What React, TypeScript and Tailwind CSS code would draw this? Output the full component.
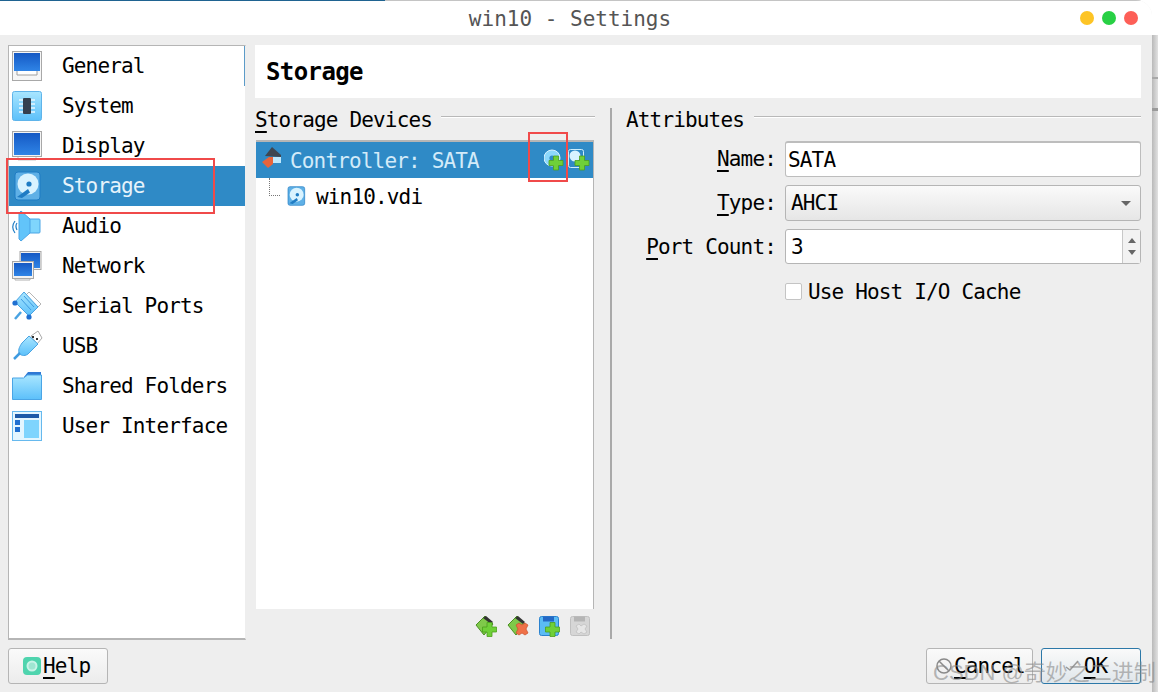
import type { ReactNode } from "react";

const MONO = "font-['DejaVu_Sans_Mono','Liberation_Mono',monospace]";
const TEXT = "text-[21px] tracking-[-0.84px] whitespace-pre";

function Frame({ children }: { children: ReactNode }) {
  return (
    <svg width="30" height="30" viewBox="0 0 30 30" className="shrink-0 overflow-visible">
      <defs>
        <linearGradient id="screen" x1="0" y1="0" x2="0" y2="1">
          <stop offset="0" stopColor="#1559c4" />
          <stop offset="1" stopColor="#2f84e6" />
        </linearGradient>
        <linearGradient id="sky" x1="0" y1="0" x2="0" y2="1">
          <stop offset="0" stopColor="#a9e6ff" />
          <stop offset="1" stopColor="#5cc0fa" />
        </linearGradient>
      </defs>
      {children}
    </svg>
  );
}

function GeneralIcon() {
  return (
    <Frame>
      <rect x="0.5" y="0.5" width="29" height="29" fill="#f6f6f6" stroke="#a8a8a8" />
      <rect x="2" y="2" width="26" height="18" fill="url(#screen)" />
      <path d="M5 20v4h20v-4" fill="#fff" stroke="#9e9e9e" />
    </Frame>
  );
}

function SystemIcon() {
  return (
    <Frame>
      <rect x="0.5" y="0.5" width="29" height="29" rx="2" fill="url(#sky)" stroke="#5fb4ea" />
      <path d="M7 9h16M7 13h16M7 17h16M7 21h16" stroke="#e9f8ff" strokeWidth="1.5" />
      <rect x="11" y="7" width="8" height="16" rx="1" fill="#35404f" />
    </Frame>
  );
}

function DisplayIcon() {
  return (
    <Frame>
      <path d="M6 24v5h18v-5" fill="#fff" stroke="#c8c8c8" />
      <rect x="0.5" y="0.5" width="29" height="25" fill="#f4f4f4" stroke="#a8a8a8" />
      <rect x="2" y="2" width="26" height="22" fill="url(#screen)" />
    </Frame>
  );
}

function DiskIcon({ size = 30 }: { size?: number }) {
  return (
    <svg width={size} height={size} viewBox="0 0 30 30" className="shrink-0">
      <rect x="3" y="1" width="25" height="28" rx="3" fill="#5fb0e6" stroke="#1f7cc4" />
      <circle cx="16" cy="13" r="10.5" fill="#d9f3ff" />
      <circle cx="17" cy="13" r="2.6" fill="#1f7cc4" />
      <path d="M5 26l11-8 2 3.5-8 5.5z" fill="#1f7cc4" />
    </svg>
  );
}

function AudioIcon() {
  return (
    <Frame>
      <rect x="17" y="8" width="11" height="14" rx="1" fill="#7fd5fc" stroke="#4aa5e6" />
      <path d="M7 2l2-2 9 8v14l-9 8-2-2z" fill="#62c4fa" stroke="#4aa5e6" />
      <path d="M3 10c-3 4-3 8 0 12M5 12c-1.500 2-1.500 4 0 7" fill="none" stroke="#1f7cc4" strokeWidth="1.2" />
    </Frame>
  );
}

function NetworkIcon() {
  return (
    <Frame>
      <rect x="8" y="0.500" width="21" height="18" fill="#f2f2f2" stroke="#a8a8a8" />
      <rect x="9" y="2" width="19" height="15" fill="url(#screen)" />
      <path d="M3 25v4h15v-4" fill="#fff" stroke="#b0b0b0" />
      <rect x="0.500" y="10.500" width="21" height="17" fill="#f2f2f2" stroke="#a8a8a8" />
      <rect x="2" y="12" width="18" height="13" fill="url(#screen)" />
    </Frame>
  );
}

function SerialIcon() {
  return (
    <Frame>
      <path d="M17 1l12 12-3 3L14 4z" fill="#fff" stroke="#b5b5b5" />
      <path d="M12 1l14 15-9 9L3 11z" fill="url(#sky)" stroke="#49a3e2" />
      <path d="M12 5l10 11M9 8l10 11" stroke="#3f9be0" strokeWidth="1" />
      <circle cx="3" cy="12" r="2.600" fill="#1f6fd0" />
      <circle cx="17" cy="26" r="2.600" fill="#1f6fd0" />
      <path d="M9 21l-6 7" stroke="#49a3e2" strokeWidth="2.500" />
    </Frame>
  );
}

function UsbIcon() {
  return (
    <Frame>
      <path d="M19 5l7-5 4 7-5 6z" fill="#fff" stroke="#aaa" />
      <path d="M17 5l9 8-10 10c-4 3-8 1-9-1-1-4 1-7 3-10z" fill="url(#sky)" stroke="#49a3e2" />
      <path d="M8 22l-6 6" stroke="#3f9be0" strokeWidth="2.500" />
      <rect x="20" y="5" width="2" height="2" fill="#333" />
      <rect x="24" y="7" width="2" height="2" fill="#333" />
    </Frame>
  );
}

function FolderIcon() {
  return (
    <Frame>
      <path d="M12 6l4-5h13v8H12z" fill="#2f79d4" />
      <path d="M0.500 28.500V7h11l4-3h14v24.500z" fill="url(#sky)" stroke="#4aa5e6" />
    </Frame>
  );
}

function UiIcon() {
  return (
    <Frame>
      <rect x="0.500" y="0.500" width="29" height="29" fill="#e3f6ff" stroke="#66b9ee" />
      <rect x="3" y="3" width="24" height="4" fill="#1d5aa8" />
      <rect x="3" y="9" width="5" height="5" fill="#1f6fd0" />
      <rect x="3" y="16" width="5" height="5" fill="#1f6fd0" />
      <rect x="12" y="9" width="15" height="18" fill="#7ed4fd" />
    </Frame>
  );
}

const SECTIONS = [
  { label: "General", icon: <GeneralIcon /> },
  { label: "System", icon: <SystemIcon /> },
  { label: "Display", icon: <DisplayIcon /> },
  { label: "Storage", icon: <DiskIcon /> },
  { label: "Audio", icon: <AudioIcon /> },
  { label: "Network", icon: <NetworkIcon /> },
  { label: "Serial Ports", icon: <SerialIcon /> },
  { label: "USB", icon: <UsbIcon /> },
  { label: "Shared Folders", icon: <FolderIcon /> },
  { label: "User Interface", icon: <UiIcon /> },
];

function Plus({ x, y }: { x: number; y: number }) {
  return (
    <path
      transform={`translate(${x} ${y})`}
      d="M4.500 0h5v4.500H14v5H9.500V14h-5V9.500H0v-5h4.500z"
      fill="#6fd038"
      stroke="#4c9f1c"
      strokeWidth="0.8"
    />
  );
}

function SideItem({ label, icon, active }: { label: string; icon: ReactNode; active: boolean }) {
  return (
    <div className={`flex h-10 items-center pl-[3px] ${active ? "bg-[#2f8ac6] text-[#e6f3fb]" : "text-black"}`}>
      {icon}
      <span className={`ml-5 pt-[2px] ${TEXT}`}>{label}</span>
    </div>
  );
}

function Heading({ children, width }: { children: ReactNode; width: string }) {
  return (
    <div className="flex h-6 items-center">
      <span className={`${width} pt-[4px] ${TEXT}`}>{children}</span>
      <div className="ml-2 h-[2px] flex-1 -translate-y-[2px] border-t border-[#b8b8b8] bg-white" />
    </div>
  );
}

function Key({ children }: { children: ReactNode }) {
  return <span className="underline decoration-2 underline-offset-4">{children}</span>;
}

function FieldLabel({ children }: { children: ReactNode }) {
  return <span className={`w-[169px] pr-[9px] pt-[2px] text-right ${TEXT}`}>{children}</span>;
}

export default function App() {
  return (
    <div className={`relative flex h-[692px] w-[1158px] overflow-hidden bg-white text-black ${MONO}`}>
      <div className="flex h-full w-[1152px] shrink-0 flex-col overflow-hidden rounded-tr-2xl bg-[#eeeeee]">
        <div className="flex h-px shrink-0">
          <div className="w-[385px] bg-[#1f6391]" />
          <div className="flex-1 bg-[#c4c4c4]" />
        </div>
        {/* title bar */}
        <div className="relative flex h-[34px] shrink-0 items-center justify-center bg-white pr-[12px] pt-[3px] text-[21px] text-[#555] tracking-[0px]">
          win10 - Settings
          <div className="absolute right-[14px] top-[10px] flex gap-2">
            <div className="h-[14px] w-[14px] rounded-full bg-[#fdc425]" />
            <div className="h-[14px] w-[14px] rounded-full bg-[#28d044]" />
            <div className="h-[14px] w-[14px] rounded-full bg-[#fd5f57]" />
          </div>
        </div>

        <div className="flex h-[604px] shrink-0 pl-2 pr-[11px] pt-[10px]">
          {/* section list */}
          <div className="h-[595px] w-[238px] shrink-0 border border-b-2 border-[#b5b5b5] border-r-[#eeeeee] bg-white">
            {SECTIONS.map((s, i) => (
              <div key={s.label} className={i === 0 ? "border-r border-[#5b9bc8]" : ""}>
                <SideItem label={s.label} icon={s.icon} active={s.label === "Storage"} />
              </div>
            ))}
          </div>

          <div className="ml-[9px] flex min-w-0 flex-1 flex-col">
            <div className="flex h-[53px] shrink-0 items-center bg-white pl-[11px] text-[24px] font-bold tracking-[-0.6px]">
              Storage
            </div>

            <div className="flex flex-1">
              {/* storage tree */}
              <div className="w-[340px] shrink-0 pt-[9px]">
                <Heading width="w-[178px]">
                  <Key>S</Key>torage Devices
                </Heading>
                <div className="ml-px mt-[9px] h-[469px] w-[338px] border-t-2 border-r border-[#b5b5b5] bg-white">
                  <div className="flex h-9 items-center bg-[#2f8ac6] pl-[5px] pr-[3px] text-[#d3ebf9]">
                    <svg width="25" height="28" viewBox="0 0 25 28" className="shrink-0">
                      <path d="M4 10L11 1l9 8v2z" fill="#3f4650" />
                      <rect x="10" y="11" width="10" height="6" fill="#bfe8fc" />
                      <path d="M1 16l7-5h4v7l-5 4z" fill="#e8643a" />
                    </svg>
                    <span className={`ml-[4px] flex-1 pt-[4px] ${TEXT}`}>Controller: SATA</span>
                    <svg width="46" height="22" viewBox="0 0 46 22" className="shrink-0">
                      <circle cx="8" cy="9" r="8" fill="#8dd8fb" stroke="#d8f3ff" />
                      <circle cx="8" cy="9" r="2.600" fill="#2f8ac6" />
                      <Plus x={5} y={7} />
                      <rect x="24.500" y="0.500" width="15" height="18" rx="2" fill="#2f8ac6" stroke="#cdeefd" />
                      <circle cx="31" cy="7" r="5.500" fill="#d8f3ff" />
                      <Plus x={31} y={7} />
                    </svg>
                  </div>
                  <div className="relative flex h-9 items-center pl-[30px]">
                    <div className="absolute left-[13px] top-0 h-[18px] w-[11px] border-b border-l border-dotted border-[#777]" />
                    <DiskIcon size={20} />
                    <span className={`ml-[10px] pt-[4px] ${TEXT}`}>win10.vdi</span>
                  </div>
                </div>
                <div className="mt-[6px] flex w-[336px] justify-end gap-[10px]">
                  <svg width="22" height="22" viewBox="0 0 22 22">
                    <path d="M1 10L10 1l8 8-9 11z" fill="#7fc94a" stroke="#4b8f24" />
                    <path d="M8 3l3-2 7 6-2 2z" fill="#333" />
                    <Plus x={7.500} y={7.500} />
                  </svg>
                  <svg width="22" height="22" viewBox="0 0 22 22">
                    <path d="M1 10L10 1l8 8-9 11z" fill="#7fc94a" stroke="#4b8f24" />
                    <path d="M8 3l3-2 7 6-2 2z" fill="#333" />
                    <path d="M9 10l3-2 3 2 3-2 3 2-2 4 2 4-3 2-3-2-3 2-3-2 2-4z" fill="#ef7148" stroke="#cc4f2a" strokeWidth="0.700" />
                  </svg>
                  <svg width="21" height="22" viewBox="0 0 21 22">
                    <rect x="0.500" y="1.500" width="19" height="19" rx="2" fill="#5bbcf5" stroke="#2b82cf" />
                    <rect x="4" y="1.500" width="11" height="5" fill="#2468c5" />
                    <Plus x={6.500} y={7.500} />
                  </svg>
                  <svg width="21" height="22" viewBox="0 0 21 22">
                    <rect x="0.500" y="1.500" width="19" height="19" rx="2" fill="#d6d6d6" stroke="#c0c0c0" />
                    <rect x="4" y="1.500" width="11" height="5" fill="#b5b5b5" />
                    <path d="M6 11l3-2 2 2 3-2 3 2-2 3 2 3-3 2-3-2-2 2-3-2 2-3z" fill="#e6e6e6" stroke="#bdbdbd" strokeWidth="0.700" />
                  </svg>
                </div>
              </div>

              {/* splitter */}
              <div className="ml-[15px] mt-[10px] w-[2px] bg-[#a9a9a9]" />

              {/* attributes */}
              <div className="ml-[14px] flex min-w-0 flex-1 flex-col pt-[9px]">
                <Heading width="w-[120px]">Attributes</Heading>
                <div className="-ml-[10px] mt-[10px] flex items-center">
                  <FieldLabel>
                    <Key>N</Key>ame:
                  </FieldLabel>
                  <div className={`flex h-9 flex-1 items-center rounded-[3px] border border-t-2 border-[#bdbdbd] bg-white pl-[2px] pt-[2px] ${TEXT}`}>
                    SATA
                  </div>
                </div>
                <div className="-ml-[10px] mt-2 flex items-center">
                  <FieldLabel>
                    <Key>T</Key>ype:
                  </FieldLabel>
                  <div className={`flex h-9 flex-1 items-center justify-between rounded-[3px] border border-[#b5b5b5] bg-gradient-to-b from-[#fafafa] to-[#e6e6e6] pl-[5px] pr-[9px] ${TEXT}`}>
                    <span className="pt-[2px]">AHCI</span>
                    <div className="h-0 w-0 border-x-[5px] border-t-[5px] border-x-transparent border-t-[#666]" />
                  </div>
                </div>
                <div className="-ml-[10px] mt-2 flex h-[35px] items-center">
                  <FieldLabel>
                    <Key>P</Key>ort Count:
                  </FieldLabel>
                  <div className="flex h-[35px] flex-1 items-center justify-between rounded-[3px] border border-[#b5b5b5] bg-white pl-[5px] text-[21px]">
                    <span className="pt-[2px]">3</span>
                    <div className="flex h-full w-[18px] flex-col items-center justify-center gap-[7px] border-l border-[#c8c8c8] bg-[#f2f2f2]">
                      <div className="h-0 w-0 border-x-[4px] border-b-[5px] border-x-transparent border-b-[#666]" />
                      <div className="h-0 w-0 border-x-[4px] border-t-[5px] border-x-transparent border-t-[#666]" />
                    </div>
                  </div>
                </div>
                <div className="ml-[159px] mt-[10px] flex items-center">
                  <div className="h-[17px] w-[17px] rounded-[2px] border border-[#c4c4c4] bg-white" />
                  <span className={`ml-[6px] pt-[3px] ${TEXT}`}>Use Host I/O Cache</span>
                </div>
              </div>
            </div>
          </div>
        </div>

        {/* dialog buttons */}
        <div className="flex flex-1 items-start justify-between pl-2 pr-[11px] pt-[9px]">
          <button className="flex h-9 w-[100px] items-center rounded-[3px] border border-[#b5b5b5] bg-gradient-to-b from-[#fafafa] to-[#ececec] pl-[14px] text-[21px] tracking-[-0.84px]">
            <svg width="18" height="18" viewBox="0 0 18 18" className="shrink-0">
              <rect width="18" height="18" rx="4" fill="#4fd4ae" />
              <circle cx="9" cy="9" r="4.500" fill="#9fe6d2" stroke="#c9f4e8" strokeWidth="2" />
            </svg>
            <span className="ml-[2px] pt-[2px]">
              <Key>H</Key>elp
            </span>
          </button>
          <div className="flex gap-2">
            <button className="flex h-9 w-[107px] items-center rounded-[3px] border border-[#b5b5b5] bg-gradient-to-b from-[#fafafa] to-[#ececec] pl-[8px] text-[21px] tracking-[-0.84px]">
              <svg width="18" height="18" viewBox="0 0 18 18" className="shrink-0">
                <circle cx="9" cy="9" r="7" fill="none" stroke="#8a8a8a" strokeWidth="1.500" />
                <path d="M4 4l10 10" stroke="#8a8a8a" strokeWidth="1.500" />
              </svg>
              <span className="ml-[1px] pt-[2px]">
                <Key>C</Key>ancel
              </span>
            </button>
            <button className="flex h-9 w-[100px] items-center justify-center gap-[5px] rounded-[3px] border border-[#2c78a8] bg-gradient-to-b from-[#fafafa] to-[#dfe6eb] pr-[10px] text-[21px] tracking-[-0.84px]">
              <svg width="14" height="14" viewBox="0 0 14 14" className="shrink-0">
                <path d="M1 8l4 3 8-9" fill="none" stroke="#9a9a9a" strokeWidth="1.500" />
              </svg>
              <span className="pt-[2px]">
                <Key>O</Key>K
              </span>
            </button>
          </div>
        </div>
      </div>

      {/* edge of the window behind */}
      <div className="mt-[35px] flex-1 bg-gradient-to-r from-[#b9b9b9] to-[#e2e2e2]">
        <div className="mt-[42px] h-[2px] bg-[#a8a8a8]" />
        <div className="mt-[29px] h-[3px] bg-[#9a9a9a]" />
      </div>

      {/* annotations drawn over the screenshot */}
      <div className="absolute left-[6px] top-[158px] h-[56px] w-[209px] border-2 border-[#f04a4a]" />
      <div className="absolute left-[528px] top-[132px] h-[50px] w-[40px] border-2 border-[#f04a4a]" />
      <div className="absolute left-[933px] top-[656px] font-['Liberation_Sans','Noto_Sans_CJK_SC',sans-serif] text-[22px] whitespace-pre text-[#8a8a8a]/60">
        CSDN @奇妙之二进制
      </div>
    </div>
  );
}
